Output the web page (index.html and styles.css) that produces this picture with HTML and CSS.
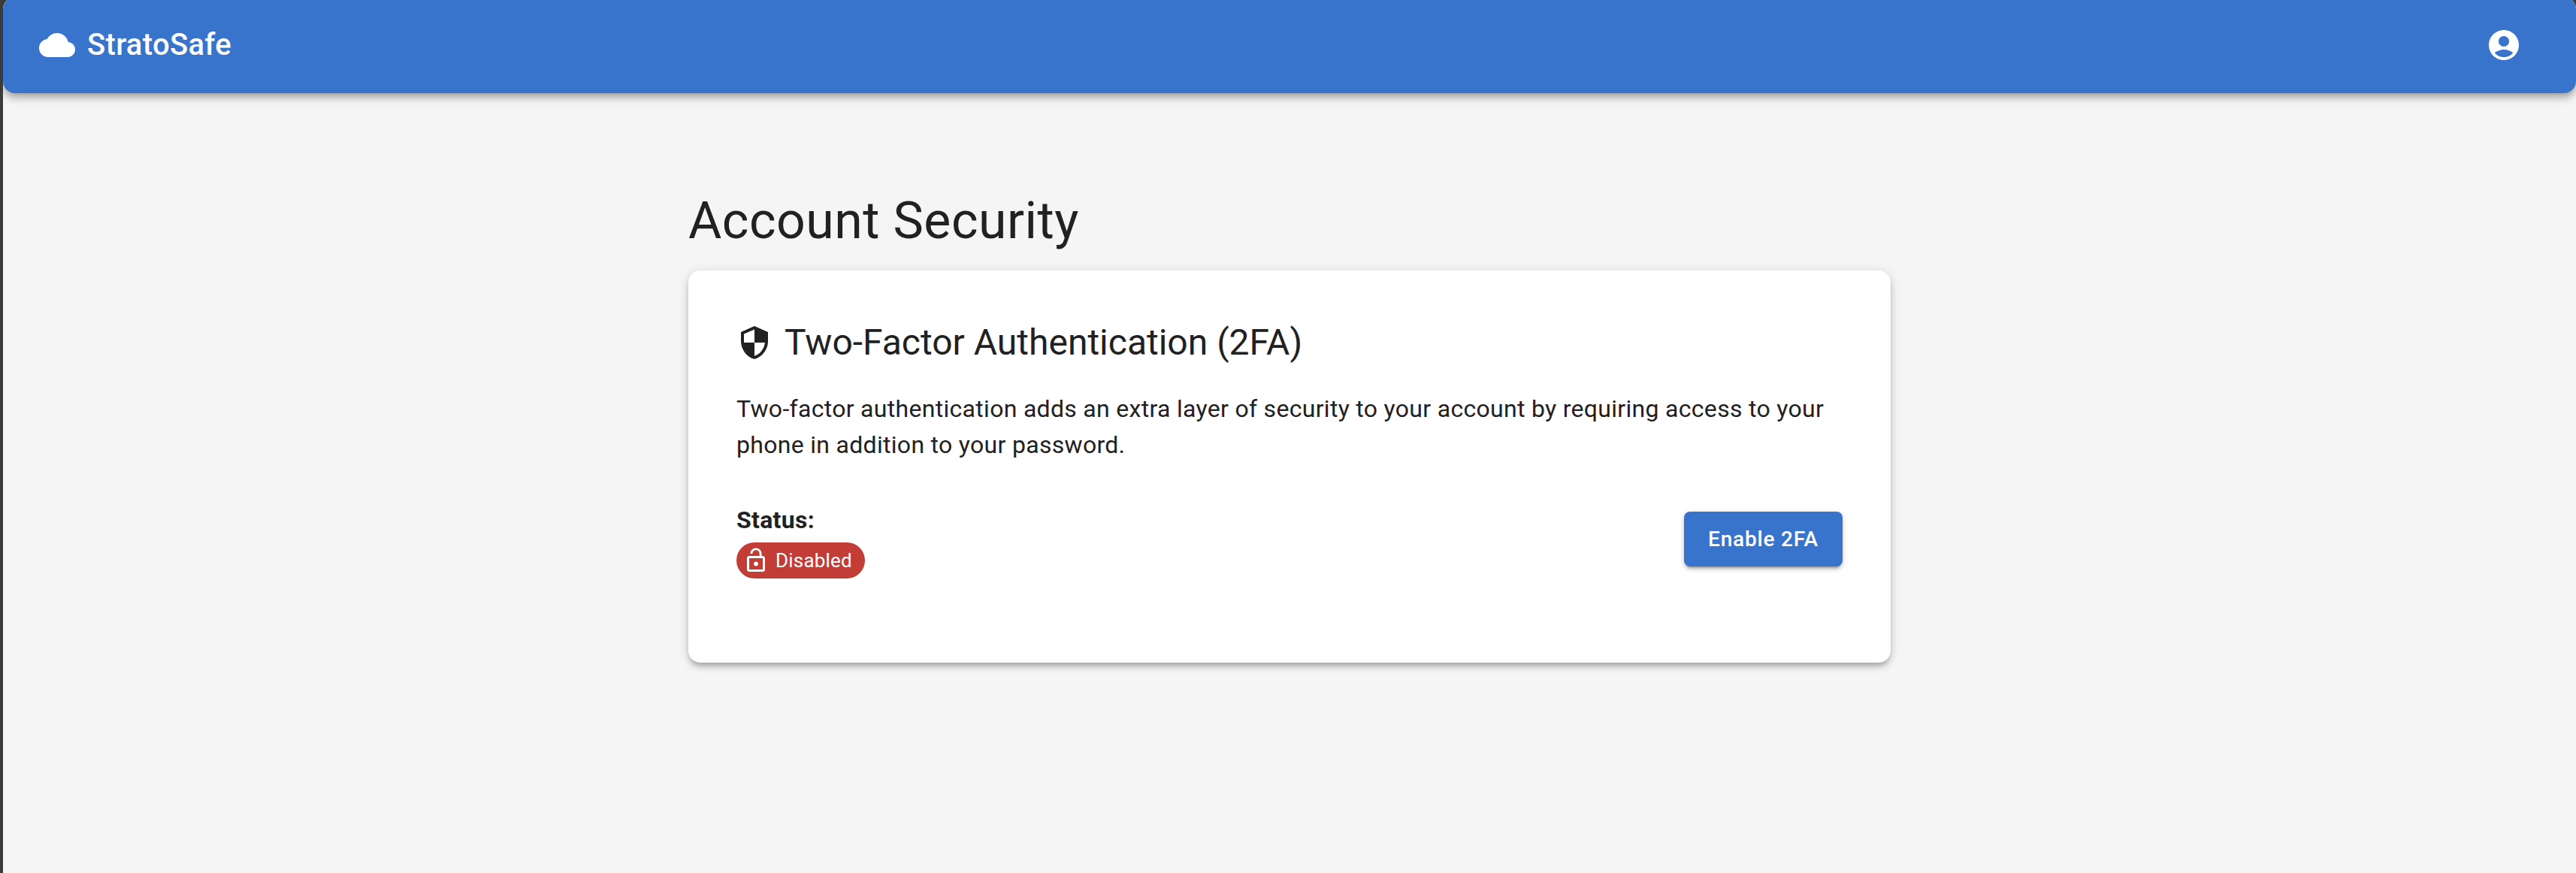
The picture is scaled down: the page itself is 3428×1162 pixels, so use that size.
FILE: index.html
```html
<!DOCTYPE html>
<html lang="en">
<head>
<meta charset="utf-8">
<title>StratoSafe</title>
<link rel="stylesheet" href="styles.css">
</head>
<body>
<div class="page">
  <header class="app-bar">
    <svg class="icon icon-cloud" viewBox="0 0 24 24"><path d="M19.35 10.04C18.67 6.59 15.64 4 12 4 9.11 4 6.6 5.64 5.35 8.04 2.34 8.36 0 10.91 0 14c0 3.31 2.69 6 6 6h13c2.76 0 5-2.24 5-5 0-2.64-2.05-4.78-4.65-4.96z"/></svg>
    <span class="brand">StratoSafe</span>
    <button class="account" aria-label="Account"><svg class="icon" viewBox="0 0 24 24"><path d="M12 2C6.48 2 2 6.48 2 12s4.48 10 10 10 10-4.48 10-10S17.52 2 12 2zm0 4c1.93 0 3.5 1.57 3.5 3.5S13.93 13 12 13s-3.5-1.57-3.5-3.5S10.07 6 12 6zm0 14c-2.03 0-4.43-.82-6.14-2.88C7.55 15.8 9.68 15 12 15s4.45.8 6.14 2.12C16.43 19.18 14.03 20 12 20z"/></svg></button>
  </header>
  <main class="content">
    <h1 class="title">Account Security</h1>
    <section class="card">
      <h2 class="card-title">
        <svg class="icon" viewBox="0 0 24 24"><path d="M12 1 3 5v6c0 5.55 3.84 10.74 9 12 5.16-1.26 9-6.45 9-12V5l-9-4zm0 10.99h7c-.53 4.12-3.28 7.79-7 8.94V12H5V6.3l7-3.11v8.8z"/></svg>
        <span>Two-Factor Authentication (2FA)</span>
      </h2>
      <p class="description">Two-factor authentication adds an extra layer of security to your account by requiring access to your phone in addition to your password.</p>
      <div class="status-row">
        <div>
          <div class="status-label">Status:</div>
          <div class="chip">
            <svg class="chip-icon" viewBox="0 0 24 24"><path d="M12 17c1.1 0 2-.9 2-2s-.9-2-2-2-2 .9-2 2 .9 2 2 2zm6-9h-1V6c0-2.76-2.24-5-5-5S7 3.240 7 6h1.900c0-1.710 1.390-3.100 3.100-3.100 1.710 0 3.100 1.390 3.100 3.100v2H6c-1.100 0-2 .9-2 2v10c0 1.100.9 2 2 2h12c1.100 0 2-.9 2-2V10c0-1.100-.9-2-2-2zm0 12H6V10h12v10z"/></svg>
            <span>Disabled</span>
          </div>
        </div>
        <button class="enable">Enable 2FA</button>
      </div>
    </section>
  </main>
</div>
</body>
</html>
```
FILE: styles.css
```css
* { box-sizing: border-box; }
html { background: #3c3b37; }
body {
  display: flow-root;
  margin: 0;
  height: 1162px;
  padding-left: 4px;
  overflow: hidden;
  color: #212121;
  font-family: Roboto, "Liberation Sans", sans-serif;
}
h1, h2, p { margin: 0; font-weight: 400; }
button { border: 0; padding: 0; color: inherit; font-family: inherit; }
.page {
  height: 1166px;
  margin-top: -4px;
  overflow: hidden;
  border-radius: 16px 16px 0 0;
  background: #f5f5f5;
}
.app-bar {
  display: flex;
  align-items: center;
  height: 128px;
  padding: 0 64px 0 48px;
  border-radius: 16px;
  background: #3874cb;
  color: #fff;
  box-shadow: 0 4px 8px -2px rgba(0,0,0,.2), 0 8px 10px 0 rgba(0,0,0,.14), 0 2px 20px 0 rgba(0,0,0,.12);
}
.icon { display: block; width: 48px; height: 48px; fill: currentColor; flex: none; }
.icon-cloud { margin-right: 16px; }
.brand { flex: 1; font-size: 40px; font-weight: 500; line-height: 64px; letter-spacing: .3px; }
.account { padding: 0 8px; background: none; }
.content { width: 1600px; margin: 0 auto; padding-top: 128px; }
.title { font-size: 68px; line-height: 84px; letter-spacing: .5px; margin-bottom: 24px; }
.card {
  height: 522px;
  padding: 64px;
  border-radius: 16px;
  background: #fff;
  box-shadow: 0 6px 6px -4px rgba(0,0,0,.2), 0 6px 8px 0 rgba(0,0,0,.14), 0 2px 16px 0 rgba(0,0,0,.12);
}
.card-title { display: flex; align-items: center; gap: 16px; font-size: 48px; line-height: 64px; }
.description { margin-top: 32px; font-size: 32px; line-height: 48px; letter-spacing: .3px; }
.status-row { display: flex; align-items: center; justify-content: space-between; margin-top: 52px; }
.status-label { font-size: 32px; font-weight: 700; line-height: 48px; letter-spacing: .3px; }
.chip {
  display: flex;
  align-items: center;
  gap: 8px;
  width: 171px;
  height: 48px;
  margin-top: 6px;
  padding-left: 8px;
  border-radius: 24px;
  background: #c23d36;
  color: #fff;
  font-size: 26px;
  letter-spacing: .2px;
}
.chip-icon { width: 36px; height: 36px; fill: currentColor; }
.enable {
  width: 211px;
  height: 73px;
  margin-bottom: 3px;
  border-radius: 8px;
  background: #3874cb;
  color: #fff;
  font-size: 28px;
  font-weight: 500;
  letter-spacing: .8px;
  box-shadow: 0 6px 2px -4px rgba(0,0,0,.2), 0 4px 4px 0 rgba(0,0,0,.14), 0 2px 10px 0 rgba(0,0,0,.12);
}
```
